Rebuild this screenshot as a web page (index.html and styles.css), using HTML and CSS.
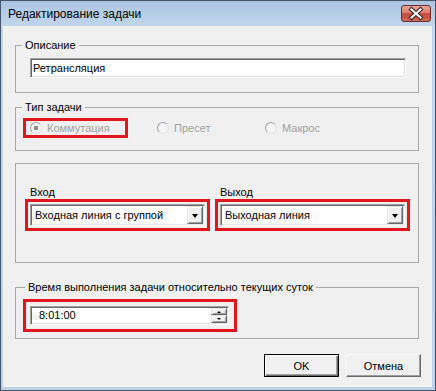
FILE: index.html
```html
<!DOCTYPE html>
<html lang="ru">

<head>
    <meta charset="UTF-8">
    <meta name="viewport" content="width=device-width, initial-scale=1.0">
    <title>Редактирование задачи</title>
    <link rel="stylesheet" href="styles.css">
</head>

<body>
    <div class="window">
        <div class="titlebar">
            <span class="title">Редактирование задачи</span>
            <span class="close-btn">
                <svg width="28" height="15" viewBox="0 0 28 15">
                    <path d="M9.5 3.5 L18.5 11.5 M18.5 3.5 L9.5 11.5" stroke="#3b2020" stroke-width="4.2" stroke-linecap="square" fill="none"/>
                    <path d="M9.5 3.5 L18.5 11.5 M18.5 3.5 L9.5 11.5" stroke="#fff" stroke-width="2.2" stroke-linecap="square" fill="none"/>
                </svg>
            </span>
        </div>

        <div class="client">
            <fieldset class="group group-desc">
                <legend>Описание</legend>
                <div class="textbox sunken">Ретрансляция</div>
            </fieldset>

            <fieldset class="group group-type">
                <legend>Тип задачи</legend>
                <div class="radio-row">
                    <div class="radio checked marked"><span class="radio-dot"></span>Коммутация</div>
                    <div class="radio"><span class="radio-dot"></span>Пресет</div>
                    <div class="radio"><span class="radio-dot"></span>Макрос</div>
                </div>
            </fieldset>

            <fieldset class="group group-io">
                <div class="io-row">
                    <div class="io-col io-in">
                        <div class="field-label">Вход</div>
                        <div class="marked combo-wrap">
                            <div class="combo sunken">
                                <span class="combo-text">Входная линия с группой</span>
                                <span class="drop-btn raised"><i class="tri-down"></i></span>
                            </div>
                        </div>
                    </div>
                    <div class="io-col io-out">
                        <div class="field-label">Выход</div>
                        <div class="marked combo-wrap">
                            <div class="combo sunken">
                                <span class="combo-text">Выходная линия</span>
                                <span class="drop-btn raised"><i class="tri-down"></i></span>
                            </div>
                        </div>
                    </div>
                </div>
            </fieldset>

            <fieldset class="group group-time">
                <legend>Время выполнения задачи относительно текущих суток</legend>
                <div class="marked time-wrap">
                    <div class="spinbox sunken">
                        <span class="spin-text">8:01:00</span>
                        <span class="spin-btns">
                            <span class="spin-up raised"><i class="tri-up-sm"></i></span>
                            <span class="spin-down raised"><i class="tri-down-sm"></i></span>
                        </span>
                    </div>
                </div>
            </fieldset>

            <div class="buttons">
                <button class="btn btn-default">OK</button>
                <button class="btn">Отмена</button>
            </div>
        </div>
    </div>
</body>

</html>
```

FILE: styles.css
```css
* {
    box-sizing: border-box;
}

body {
    margin: 0;
    font-family: "Liberation Sans", Arial, sans-serif;
    font-size: 11px;
    color: #000;
}

.window {
    width: 436px;
    height: 391px;
    border: 1px solid #44566b;
    background: linear-gradient(#abc4e0 0, #c2d7ed 26px, #bed3ea 100%);
    display: flex;
    flex-direction: column;
}

.titlebar {
    height: 25px;
    display: flex;
    align-items: center;
    justify-content: space-between;
    padding: 0 4px 0 7px;
}

.title {
    font-size: 12px;
    line-height: 14px;
}

.close-btn {
    width: 30px;
    height: 17px;
    border: 1px solid #6a2d2d;
    border-radius: 3px;
    background: linear-gradient(#e8a898 0%, #d9796a 45%, #c34a3b 52%, #cf6856 100%);
    display: flex;
}

.client {
    flex: 1;
    margin: 0 3px 3px 2px;
    background: #f0f0f0;
    padding-left: 12px;
    display: flex;
    flex-direction: column;
}

/* group boxes */
.group {
    width: 404px;
    margin: 0;
    padding: 0;
    min-width: 0;
    border: 1px solid #a9a9a9;
}

.group legend {
    margin-left: 6px;
    padding: 0 3px;
    line-height: 14px;
}

.group-desc {
    margin-top: 12px;
    padding-top: 6px;
    padding-bottom: 14px;
}

.group-desc .textbox {
    margin-left: 14px;
}

.group-type {
    margin-top: 7px;
    padding-top: 4px;
    padding-bottom: 12px;
}

.group-io {
    margin-top: 12px;
    padding-top: 21px;
    padding-bottom: 31px;
}

.io-row {
    display: flex;
    gap: 5px;
    padding-left: 9px;
}

.group-time {
    margin-top: 17px;
    padding-top: 5px;
    padding-bottom: 6px;
}

.group-time legend {
    margin-left: 9px;
}

.marked {
    border: 3px solid #e3151e;
}

/* 3d borders */
.sunken {
    background: #fff;
    border: 1px solid;
    border-color: #a0a0a0 #fff #fff #a0a0a0;
    box-shadow: inset 1px 1px #696969, inset -1px -1px #e3e3e3;
}

.raised {
    background: #f0f0f0;
    border: 1px solid;
    border-color: #e3e3e3 #696969 #696969 #e3e3e3;
    box-shadow: inset 1px 1px #fff, inset -1px -1px #a0a0a0;
    display: flex;
    align-items: center;
    justify-content: center;
}

.textbox {
    width: 376px;
    height: 20px;
    line-height: 18px;
    padding-left: 2px;
}

/* radios */
.radio-row {
    display: grid;
    grid-template-columns: 134px 108px auto;
    align-items: center;
    padding-left: 7px;
}

.radio {
    display: flex;
    align-items: center;
    gap: 5px;
    color: #a0a0a0;
    line-height: 14px;
}

.radio.marked {
    width: 105px;
    padding-left: 4px;
}

.radio-dot {
    width: 12px;
    height: 12px;
    border-radius: 50%;
    border: 1px solid;
    border-color: #a0a0a0 #e3e3e3 #e3e3e3 #a0a0a0;
    background: #f4f4f4;
}

.radio.checked .radio-dot {
    background: radial-gradient(circle, #8c8c8c 0 2px, #f4f4f4 2.6px);
}

/* combos */
.field-label {
    line-height: 14px;
    padding-left: 5px;
}

.combo-wrap {
    padding: 2px;
}

.combo {
    height: 22px;
    padding: 1px;
    display: flex;
    align-items: stretch;
}

.io-in .combo-wrap {
    width: 185px;
}

.io-out .combo-wrap {
    width: 195px;
}

.combo-text {
    flex: 1;
    padding-left: 3px;
    line-height: 18px;
    white-space: nowrap;
}

.drop-btn {
    width: 16px;
}

.tri-down {
    width: 0;
    height: 0;
    border-left: 3.5px solid transparent;
    border-right: 3.5px solid transparent;
    border-top: 4px solid #000;
    margin-top: 1px;
}

/* time spinner */
.time-wrap {
    width: 214px;
    margin-left: 7px;
    padding: 4px 5px 4px 4px;
}

.spinbox {
    width: 199px;
    height: 19px;
    padding: 1px;
    display: flex;
}

.spin-text {
    flex: 1;
    padding-left: 7px;
    line-height: 15px;
}

.spin-btns {
    width: 16px;
    display: flex;
    flex-direction: column;
}

.spin-up {
    height: 7px;
}

.spin-down {
    height: 8px;
}

.tri-up-sm {
    width: 0;
    height: 0;
    border-left: 2px solid transparent;
    border-right: 2px solid transparent;
    border-bottom: 2px solid #000;
}

.tri-down-sm {
    width: 0;
    height: 0;
    border-left: 2px solid transparent;
    border-right: 2px solid transparent;
    border-top: 2px solid #000;
}

/* dialog buttons */
.buttons {
    display: flex;
    justify-content: flex-end;
    gap: 7px;
    margin: 15px 11px 0 0;
}

.btn {
    width: 75px;
    height: 23px;
    padding: 0;
    font-family: inherit;
    font-size: 11px;
    color: #000;
    background: #f0f0f0;
    border: 1px solid;
    border-color: #fff #696969 #696969 #fff;
    box-shadow: inset -1px -1px #a0a0a0;
}

.btn-default {
    border: 1px solid #000;
    box-shadow: inset 1px 1px #fff, inset -1px -1px #696969, inset -2px -2px #a0a0a0;
}
```
